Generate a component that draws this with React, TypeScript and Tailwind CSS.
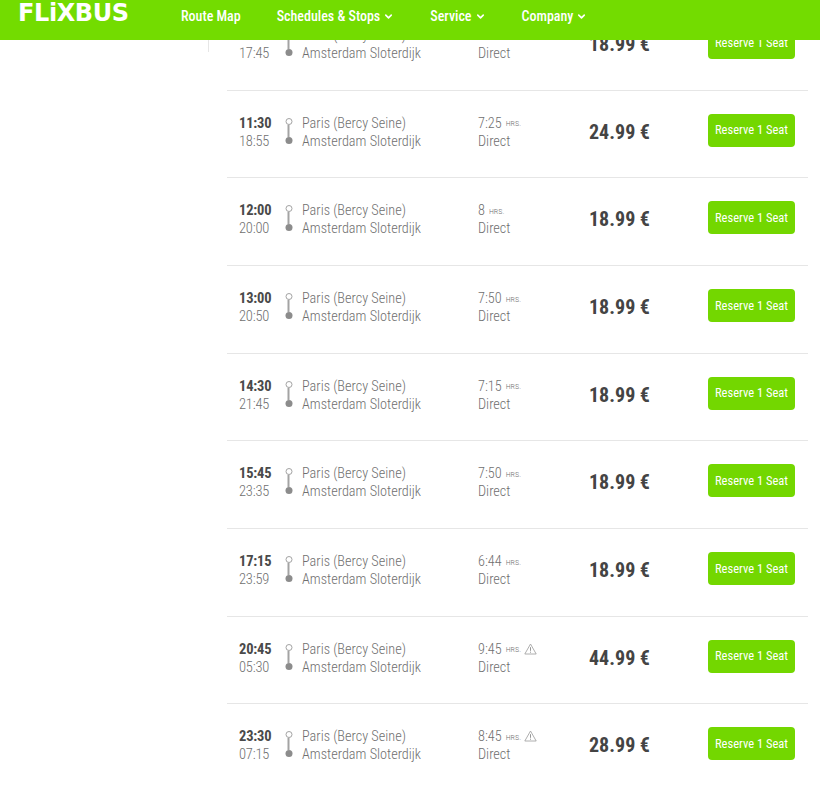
import React from 'react';
import { ChevronDown } from 'lucide-react';

interface Trip {
  depart: string;
  arrive: string;
  duration: string;
  price: string;
  warning?: boolean;
}

const trips: Trip[] = [
  { depart: '10:00', arrive: '17:45', duration: '7:45', price: '18.99 €' },
  { depart: '11:30', arrive: '18:55', duration: '7:25', price: '24.99 €' },
  { depart: '12:00', arrive: '20:00', duration: '8', price: '18.99 €' },
  { depart: '13:00', arrive: '20:50', duration: '7:50', price: '18.99 €' },
  { depart: '14:30', arrive: '21:45', duration: '7:15', price: '18.99 €' },
  { depart: '15:45', arrive: '23:35', duration: '7:50', price: '18.99 €' },
  { depart: '17:15', arrive: '23:59', duration: '6:44', price: '18.99 €' },
  { depart: '20:45', arrive: '05:30', duration: '9:45', price: '44.99 €', warning: true },
  { depart: '23:30', arrive: '07:15', duration: '8:45', price: '28.99 €', warning: true },
];

const navItems = [
  { label: 'Route Map', menu: false },
  { label: 'Schedules & Stops', menu: true },
  { label: 'Service', menu: true },
  { label: 'Company', menu: true },
];

const WarningIcon = () => (
  <svg width="13" height="12" viewBox="0 0 13 12" fill="none" className="ml-[3px]">
    <path d="M6.5 1 12.2 11H.8z" stroke="#a5a5a5" strokeWidth="0.9" strokeLinejoin="round" />
    <path d="M6.5 4.2v3.6M6.5 8.7v1" stroke="#8a8a8a" strokeWidth="0.9" />
  </svg>
);

const RouteLine = () => (
  <div className="flex flex-col items-center w-[8px] h-[36px] pt-[4px]">
    <div className="w-[7px] h-[7px] rounded-full border border-[#a3a3a3] bg-white" />
    <div className="w-[2px] h-[12px] bg-[#a3a3a3]" />
    <div className="w-[7px] h-[7px] rounded-full bg-[#8c8c8c]" />
  </div>
);

const TripRow = ({ trip }: { trip: Trip }) => (
  <div className="flex items-start h-[87.65px] border-t border-[#e6e6e6] pt-[23px] text-[#6f6f6f] text-[14.25px] leading-[18px] font-light [font-stretch:75%]">
    <div className="w-[45px] ml-[12px] mt-[1px] text-[14.5px] tracking-[-0.2px]">
      <div className="font-bold text-[#4a4a4a]">{trip.depart}</div>
      <div>{trip.arrive}</div>
    </div>
    <div className="ml-[1px] mr-[9px] -translate-x-[0.5px]">
      <RouteLine />
    </div>
    <div className="w-[176px]">
      <div>Paris (Bercy Seine)</div>
      <div>Amsterdam Sloterdijk</div>
    </div>
    <div className="w-[111px]">
      <div className="flex items-center h-[18px]">
        {trip.duration}
        <span className="ml-[4px] text-[8px] mt-[3px]">HRS.</span>
        {trip.warning && <WarningIcon />}
      </div>
      <div>Direct</div>
    </div>
    <div className="w-[119px] pt-[6px] text-[20px] leading-[24px] font-bold text-[#444444]">{trip.price}</div>
    <button className="w-[87px] h-[33px] rounded-[4px] bg-[#73d700] text-white text-[12.5px] leading-[28px] font-normal text-center">
      Reserve 1 Seat
    </button>
  </div>
);

export default function App() {
  return (
    <div className="relative h-[787px] overflow-hidden bg-white font-['Roboto',sans-serif]">
      <header className="absolute top-0 left-0 right-0 z-10 h-[40px] bg-[#73dc00] flex items-start text-white [font-stretch:75%]">
        <div className="ml-[18px] w-[163px] h-[27px] text-[24px] leading-[27px] font-bold tracking-[-0.4px] font-['DejaVu_Sans',sans-serif] [font-stretch:100%]">
          FLiXBUS
        </div>
        <nav className="flex gap-[36px] text-[14px] font-medium leading-[32px]">
          {navItems.map((item) => (
            <span key={item.label} className="flex items-center">
              {item.label}
              {item.menu && <ChevronDown size={11} strokeWidth={3.5} className="ml-[3px] mt-[1px]" />}
            </span>
          ))}
        </nav>
      </header>
      <div className="absolute left-[208px] top-[40px] h-[12px] w-px bg-[#e6e6e6]" />
      <main className="ml-[227px] mr-[12px] -mt-[20.8px]">
        <div className="h-[23px]" />
        {trips.map((trip) => (
          <TripRow key={trip.depart} trip={trip} />
        ))}
      </main>
    </div>
  );
}
